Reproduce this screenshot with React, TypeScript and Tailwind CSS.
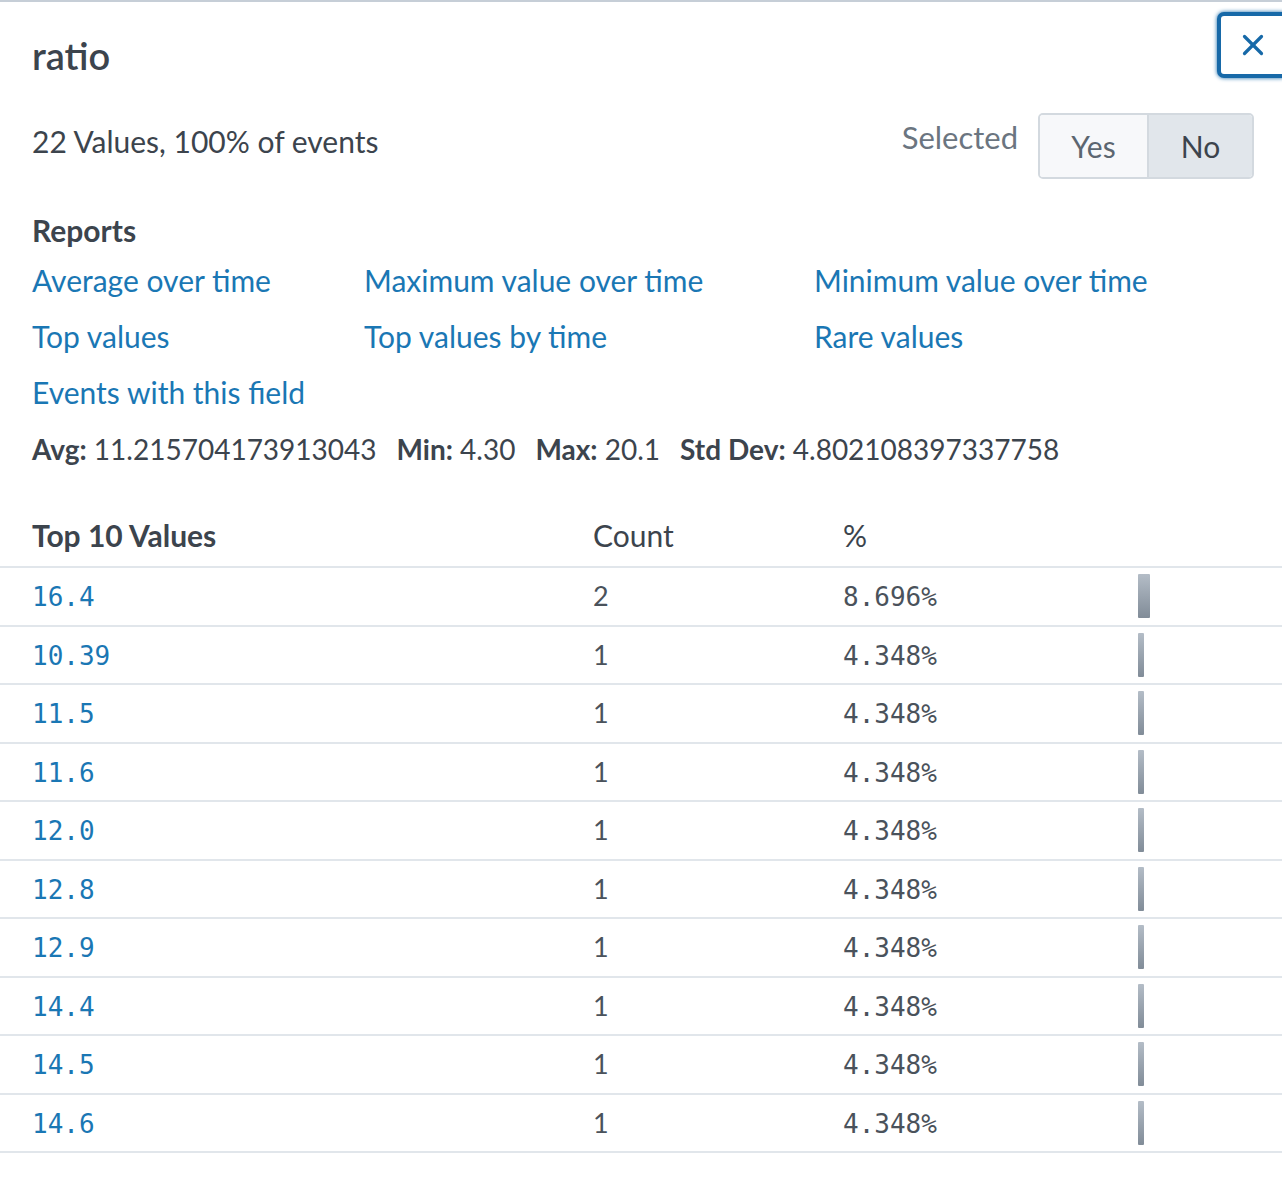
import { X } from 'lucide-react'

const LINKS: string[][] = [
  ['Average over time', 'Maximum value over time', 'Minimum value over time'],
  ['Top values', 'Top values by time', 'Rare values'],
  ['Events with this field', '', ''],
]

const ROWS = [
  { value: '16.4', count: 2, pct: '8.696%' },
  { value: '10.39', count: 1, pct: '4.348%' },
  { value: '11.5', count: 1, pct: '4.348%' },
  { value: '11.6', count: 1, pct: '4.348%' },
  { value: '12.0', count: 1, pct: '4.348%' },
  { value: '12.8', count: 1, pct: '4.348%' },
  { value: '12.9', count: 1, pct: '4.348%' },
  { value: '14.4', count: 1, pct: '4.348%' },
  { value: '14.5', count: 1, pct: '4.348%' },
  { value: '14.6', count: 1, pct: '4.348%' },
]

function Stat({ label, value }: { label: string; value: string }) {
  return (
    <span className="mr-[20px]">
      <span className="font-bold">{label}</span> {value}
    </span>
  )
}

export default function App() {
  return (
    <div className="w-[1282px] h-[1182px] overflow-hidden bg-white border-t-2 border-[#c6ced7] font-['Lato','Liberation_Sans',sans-serif] text-[#3c444d]">
      <div className="flex justify-between h-[104px]">
        <h2 className="pl-[32px] pt-[31px] text-[38px] leading-[44px] font-semibold">ratio</h2>
        <button className="mt-[10px] -mr-[6px] w-[71px] h-[66px] flex items-center justify-center rounded-[7px] border-[4px] border-[#1769a8] shadow-[0_0_4px_#1769a8] bg-white">
          <X size={34} strokeWidth={2.3} className="text-[#1769a8]" />
        </button>
      </div>

      <div className="flex items-center justify-between pl-[32px] pr-[28px] h-[80px]">
        <p className="text-[30px] leading-[36px] -mt-[10px]">22 Values, 100% of events</p>
        <div className="flex items-center">
          <span className="text-[31px] leading-[36px] text-[#6b7580] mr-[20px] -mt-[18px]">Selected</span>
          <div className="flex h-[66px] rounded-[5px] border-2 border-[#d3d9df] overflow-hidden text-[30px]">
            <span className="w-[109px] flex items-center justify-center bg-[#f7f8fa] border-r-2 border-[#d3d9df] text-[#5c6670]">Yes</span>
            <span className="w-[103px] flex items-center justify-center bg-[#e1e6eb] text-[#3c444d]">No</span>
          </div>
        </div>
      </div>

      <div className="pl-[32px] pt-[24px]">
        <h3 className="text-[30px] leading-[40px] font-bold">Reports</h3>
        <div className="mt-[2px]">
          {LINKS.map((row, i) => (
            <div key={i} className="grid grid-cols-[332px_450px_1fr] h-[56px] items-center text-[30px] text-[#1a77b4]">
              {row.map((l, j) => (
                <a key={j} className="cursor-pointer">{l}</a>
              ))}
            </div>
          ))}
        </div>
        <p className="text-[28px] leading-[40px] mt-[9px]">
          <Stat label="Avg:" value="11.215704173913043" />
          <Stat label="Min:" value="4.30" />
          <Stat label="Max:" value="20.1" />
          <Stat label="Std Dev:" value="4.802108397337758" />
        </p>
      </div>

      <div className="mt-[35px]">
        <div className="grid grid-cols-[593px_250px_295px_1fr] h-[64px] items-center border-b-2 border-[#e1e6eb] text-[30px]">
          <span className="pl-[32px] font-bold">Top 10 Values</span>
          <span>Count</span>
          <span>%</span>
          <span />
        </div>
        {ROWS.map((r) => (
          <div key={r.value} className="grid grid-cols-[593px_250px_295px_1fr] h-[58.5px] items-center border-b-2 border-[#e1e6eb]">
            <span className="pl-[32px] pt-[3px] font-['DejaVu_Sans_Mono',monospace] text-[26px] text-[#1a77b4]">{r.value}</span>
            <span className="text-[27px] text-[#4a525b]">{r.count}</span>
            <span className="pt-[3px] font-['DejaVu_Sans_Mono',monospace] text-[26px] text-[#4a525b]">{r.pct}</span>
            <span className="flex items-center">
              <span
                className="h-[44px] rounded-[1px] bg-gradient-to-b from-[#b4bdc7] to-[#818c98]"
                style={{ width: r.count === 2 ? 12 : 6 }}
              />
            </span>
          </div>
        ))}
      </div>
    </div>
  )
}
